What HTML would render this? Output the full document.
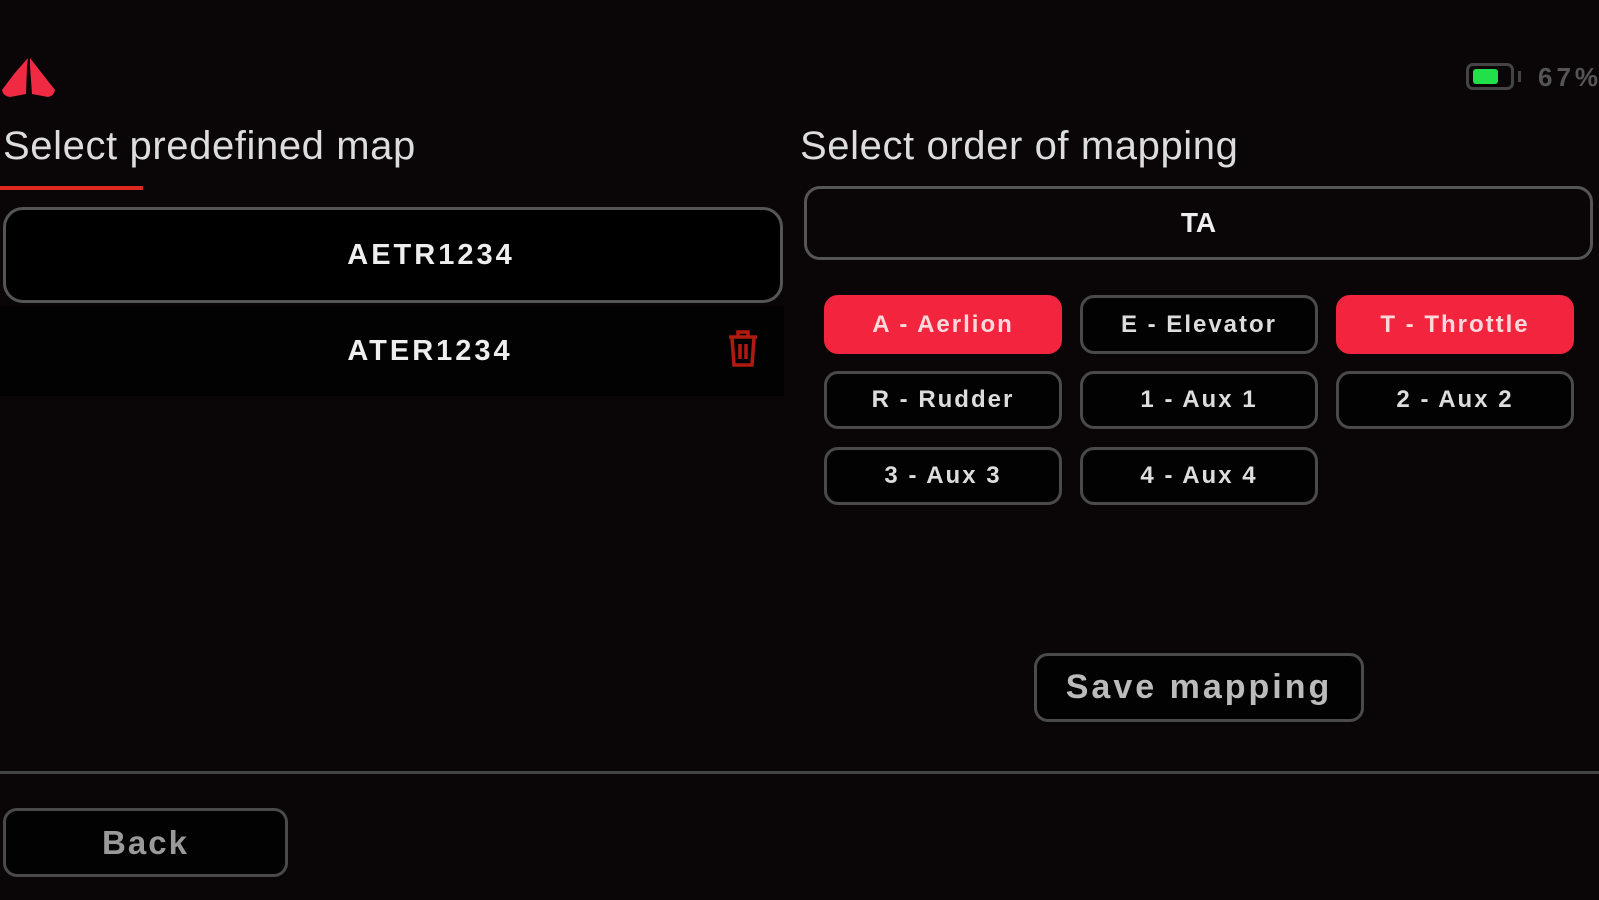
<!DOCTYPE html>
<html><head><meta charset="utf-8"><style>
*{margin:0;padding:0;box-sizing:border-box}
body{width:1599px;height:900px;background:#0a0608;position:relative;overflow:hidden;font-family:"Liberation Sans",sans-serif;color:#eee}
.abs{position:absolute}
.h{font-size:40px;color:#ddd;letter-spacing:0.6px}
.box{position:absolute;border:3px solid #555;border-radius:16px;display:flex;align-items:center;justify-content:center;font-weight:bold;color:#eee}
.btn{position:absolute;border:3px solid #4a4a4a;border-radius:14px;display:flex;align-items:center;justify-content:center;font-weight:bold;font-size:24px;color:#ddd;background:#030203;letter-spacing:2px}
.red{background:#f2243e;border-color:#f2243e;color:#ffd8dc}
</style></head><body>
<svg class="abs" style="left:0;top:56px" width="58" height="44" viewBox="0 0 58 44"><path d="M28 2 L14 18 L2 34 Q3 40 10 41 L26 38 L27 10 Z M30 2 L44 20 L55 34 Q54 40 48 41 L32 38 L30 10 Z" fill="#f02a42"/></svg>
<div class="abs" style="left:1466px;top:63px;width:48px;height:27px;border:3px solid #444;border-radius:7px"></div>
<div class="abs" style="left:1473px;top:69px;width:25px;height:15px;background:#22e04a;border-radius:3px"></div>
<div class="abs" style="left:1518px;top:71px;width:3px;height:11px;background:#444"></div>
<div class="abs" style="left:1538px;top:62px;font-size:26px;color:#555;font-weight:bold;letter-spacing:4px">67%</div>

<div class="abs h" style="left:3px;top:124px">Select predefined map</div>
<div class="abs" style="left:0;top:186px;width:143px;height:4px;background:#e0281e"></div>
<div class="box" style="left:3px;top:207px;width:780px;height:96px;background:#000;font-size:29px;border-radius:20px;letter-spacing:3px;padding-left:76px">AETR1234</div>
<div class="abs" style="left:0;top:306px;width:784px;height:90px;background:#030203;display:flex;align-items:center;justify-content:center;font-weight:bold;font-size:29px;color:#eee;letter-spacing:3px;padding-left:76px">ATER1234</div>
<svg class="abs" style="left:726px;top:330px" width="34" height="38" viewBox="0 0 34 38"><path d="M12 6V2h10v4M3 7h28M6 8l2 27h18l2-27M14 14v15M20 14v15" fill="none" stroke="#b01a10" stroke-width="3.5"/></svg>

<div class="abs h" style="left:800px;top:124px">Select order of mapping</div>
<div class="box" style="left:804px;top:186px;width:789px;height:74px;font-size:28px;border-radius:16px">TA</div>

<div class="btn red" style="left:824px;top:295px;width:238px;height:59px">A - Aerlion</div>
<div class="btn" style="left:1080px;top:295px;width:238px;height:59px">E - Elevator</div>
<div class="btn red" style="left:1336px;top:295px;width:238px;height:59px">T - Throttle</div>
<div class="btn" style="left:824px;top:371px;width:238px;height:58px">R - Rudder</div>
<div class="btn" style="left:1080px;top:371px;width:238px;height:58px">1 - Aux 1</div>
<div class="btn" style="left:1336px;top:371px;width:238px;height:58px">2 - Aux 2</div>
<div class="btn" style="left:824px;top:447px;width:238px;height:58px">3 - Aux 3</div>
<div class="btn" style="left:1080px;top:447px;width:238px;height:58px">4 - Aux 4</div>

<div class="btn" style="left:1034px;top:653px;width:330px;height:69px;font-size:34px;color:#bbb;letter-spacing:3px">Save mapping</div>
<div class="abs" style="left:0;top:771px;width:1599px;height:3px;background:#444"></div>
<div class="btn" style="left:3px;top:808px;width:285px;height:69px;font-size:33px;color:#999">Back</div>
</body></html>
